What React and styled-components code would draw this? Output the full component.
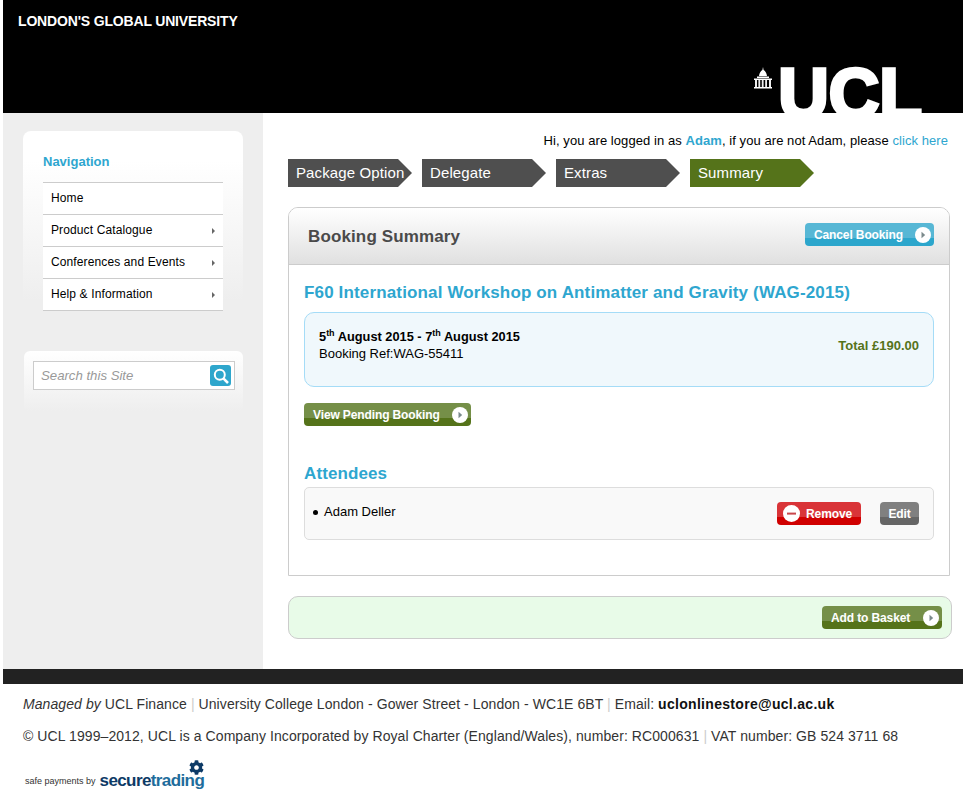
import React from 'react'
import styled, { createGlobalStyle } from 'styled-components'
import { FaCog } from 'react-icons/fa'

const GlobalStyle = createGlobalStyle`
  html, body { margin: 0; padding: 0; background: #fff; }
  body { font-family: "Liberation Sans", Arial, sans-serif; color: #000; }
  * { box-sizing: border-box; }
`

const tones = {
  blue: ['#57b7d5', '#2ca6cc'],
  green: ['#758f48', '#55731a'],
  red: ['#d93438', '#d00000'],
  grey: ['#808080', '#666666'],
}

function Arrow() {
  return (
    <Disc>
      <svg width="16" height="16" viewBox="0 0 16 16">
        <circle cx="8" cy="8" r="8" fill="#fff" />
        <path d="M6.5 4.8 L10.2 8 L6.5 11.2 Z" fill="#7b8a8c" />
      </svg>
    </Disc>
  )
}

function Minus() {
  return (
    <Disc>
      <svg width="17" height="17" viewBox="0 0 17 17">
        <circle cx="8.5" cy="8.5" r="8.5" fill="#fff" />
        <rect x="4" y="7.6" width="9" height="2" fill="#c8484c" />
      </svg>
    </Disc>
  )
}

function Dome() {
  return (
    <svg width="18" height="22" viewBox="0 0 18 22">
      <path d="M9 0 L9.6 3 C11.6 4 12.6 6.4 13 9 L5 9 C5.4 6.4 6.4 4 8.4 3 Z" fill="#fff" />
      <path d="M3 9.6 H15 V11 H3 Z M0 11.4 H18 V13 H0 Z M0 20 H18 V21.6 H0 Z" fill="#fff" />
      <path d="M1 13 H3 V20 H1 Z M4.4 13 H6.2 V20 H4.4 Z M7.8 13 H9.6 V20 H7.8 Z M11.2 13 H13 V20 H11.2 Z M15 13 H17 V20 H15 Z" fill="#eee" />
    </svg>
  )
}

function SearchIcon() {
  return (
    <svg width="16" height="16" viewBox="0 0 16 16" fill="none" stroke="#fff" strokeWidth="2">
      <circle cx="6.8" cy="6.8" r="5" />
      <path d="M10.6 10.6 L15 15" strokeWidth="2.6" />
    </svg>
  )
}

const navItems = [
  { label: 'Home' },
  { label: 'Product Catalogue', more: true },
  { label: 'Conferences and Events', more: true },
  { label: 'Help & Information', more: true },
]

const steps = ['Package Option', 'Delegate', 'Extras', 'Summary']

export default function App() {
  return (
    <Page>
      <GlobalStyle />
      <Header>
        <Strap>LONDON'S GLOBAL UNIVERSITY</Strap>
        <Logo>
          <Dome />
          <LogoWord>UCL</LogoWord>
        </Logo>
      </Header>

      <Body>
        <Sidebar>
          <NavCard>
            <NavTitle>Navigation</NavTitle>
            <NavList>
              {navItems.map((item) => (
                <NavItem key={item.label}>
                  {item.label}
                  {item.more && <NavCaret />}
                </NavItem>
              ))}
            </NavList>
          </NavCard>
          <SearchCard>
            <SearchBox>
              <SearchInput placeholder="Search this Site" />
              <SearchBtn><SearchIcon /></SearchBtn>
            </SearchBox>
          </SearchCard>
        </Sidebar>

        <Main>
          <Greeting>
            Hi, you are logged in as <UserName>Adam</UserName>, if you are not Adam, please <Link>click here</Link>
          </Greeting>
          <Steps>
            {steps.map((s) => (
              <Step key={s} $active={s === 'Summary'}>{s}</Step>
            ))}
          </Steps>

          <Panel>
            <PanelHead>
              <PanelTitle>Booking Summary</PanelTitle>
              <Button $tone="blue" $width={129}>Cancel Booking<Arrow /></Button>
            </PanelHead>
            <PanelBody>
              <Heading>F60 International Workshop on Antimatter and Gravity (WAG-2015)</Heading>
              <InfoBox>
                <div>
                  <Dates>5<sup>th</sup> August 2015 - 7<sup>th</sup> August 2015</Dates>
                  <Ref>Booking Ref:WAG-55411</Ref>
                </div>
                <Total>Total £190.00</Total>
              </InfoBox>
              <Button $tone="green" $width={167}>View Pending Booking<Arrow /></Button>
              <SubHeading>Attendees</SubHeading>
              <Attendee>
                <AttendeeName>Adam Deller</AttendeeName>
                <Button $tone="red" $width={84} $iconFirst><Minus />Remove</Button>
                <Button $tone="grey" $width={39} $center>Edit</Button>
              </Attendee>
            </PanelBody>
          </Panel>

          <BasketBar>
            <Button $tone="green" $width={120}>Add to Basket<Arrow /></Button>
          </BasketBar>
        </Main>
      </Body>

      <DarkBar />

      <Footer>
        <FootLine>
          <em>Managed by</em> UCL Finance <Sep>|</Sep> University College London - Gower Street - London - WC1E 6BT <Sep>|</Sep> Email: <strong>uclonlinestore@ucl.ac.uk</strong>
        </FootLine>
        <FootLine>
          © UCL 1999–2012, UCL is a Company Incorporated by Royal Charter (England/Wales), number: RC000631 <Sep>|</Sep> VAT number: GB 524 3711 68
        </FootLine>
        <Payments>
          <SafeText>safe payments by</SafeText>
          <Brand>
            <Gear><FaCog size={15} /></Gear>
            secure<BrandTail>trading</BrandTail>
          </Brand>
        </Payments>
      </Footer>
    </Page>
  )
}

const Page = styled.div`
  width: 960px;
  margin-left: 3px;
`
const Header = styled.header`
  height: 113px;
  background: #000;
  overflow: hidden;
  padding: 13px 15px 0;
  display: flex;
  justify-content: space-between;
`
const Strap = styled.div`
  color: #fff;
  font-size: 14px;
  font-weight: bold;
  line-height: 17px;
  letter-spacing: -0.17px;
`
const Logo = styled.div`
  display: flex;
  align-items: flex-start;
  gap: 6px;
  margin: 54px 26px 0 0;
`
const LogoWord = styled.div`
  color: #fff;
  font-size: 70px;
  font-weight: bold;
  line-height: 51px;
  margin-top: 2px;
  -webkit-text-stroke: 3.5px #fff;
`
const Body = styled.div`
  display: flex;
  height: 556px;
`
const Sidebar = styled.aside`
  width: 260px;
  background: #eeeeee;
  padding: 18px 20px 0;
`
const NavCard = styled.div`
  height: 196px;
  padding: 23px 20px 0;
  border-radius: 8px;
  background: linear-gradient(#ffffff 0, #ffffff 30px, #eeeeee 170px);
`
const NavTitle = styled.div`
  color: #2ea6cf;
  font-size: 13px;
  font-weight: bold;
  line-height: 16px;
  margin-bottom: 12px;
`
const NavList = styled.ul`
  list-style: none;
  margin: 0;
  padding: 0;
  background: #fff;
  border-bottom: 1px solid #cccccc;
`
const NavItem = styled.li`
  height: 32px;
  border-top: 1px solid #cccccc;
  padding: 0 8px 2px;
  display: flex;
  align-items: center;
  justify-content: space-between;
  font-size: 12px;
  letter-spacing: 0.12px;
  color: #000;
`
const NavCaret = styled.span`
  width: 0;
  height: 0;
  border-left: 3px solid #666;
  border-top: 3px solid transparent;
  border-bottom: 3px solid transparent;
  margin-top: 2px;
`
const SearchCard = styled.div`
  margin: 24px 0 0 1px;
  height: 62px;
  padding: 10px 8px 0 9px;
  border-radius: 6px;
  background: linear-gradient(#ffffff 0, #eeeeee 60px);
`
const SearchBox = styled.div`
  height: 29px;
  background: #fff;
  border: 1px solid #cccccc;
  display: flex;
  align-items: center;
  justify-content: space-between;
  padding: 0 3px 0 7px;
`
const SearchInput = styled.input`
  border: 0;
  outline: 0;
  width: 160px;
  padding: 0;
  font-family: "Liberation Sans", Arial, sans-serif;
  font-size: 13.2px;
  font-style: italic;
  background: transparent;
  &::placeholder { color: #999999; opacity: 1; }
`
const SearchBtn = styled.span`
  width: 21px;
  height: 21px;
  border-radius: 3px;
  background: #2ea6cc;
  display: flex;
  align-items: center;
  justify-content: center;
`
const Main = styled.main`
  width: 700px;
  padding: 20px 11px 0 25px;
  background: #fff;
`
const Greeting = styled.div`
  text-align: right;
  font-size: 13px;
  line-height: 16px;
  letter-spacing: 0.07px;
  padding-right: 4px;
  margin-bottom: 10px;
`
const UserName = styled.b`
  color: #2ea6cf;
  font-size: 13px;
`
const Link = styled.span`
  color: #2ea6cf;
`
const Steps = styled.div`
  display: flex;
  gap: 10px;
  margin: 0 0 20px;
`
const Step = styled.div`
  width: 124px;
  height: 28px;
  line-height: 27px;
  padding-left: 8px;
  font-size: 15px;
  letter-spacing: 0.12px;
  white-space: nowrap;
  color: #fff;
  background: ${(p) => (p.$active ? '#55731a' : '#4f4f4f')};
  clip-path: polygon(0 0, 110px 0, 124px 14px, 110px 28px, 0 28px);
`
const Panel = styled.section`
  width: 662px;
  height: 369px;
  border: 1px solid #cccccc;
  border-radius: 10px 10px 0 0;
`
const PanelHead = styled.div`
  height: 57px;
  border-radius: 9px 9px 0 0;
  background: linear-gradient(#ffffff, #e0e0e0);
  border-bottom: 1px solid #cccccc;
  padding: 15px 15px 0 19px;
  display: flex;
  justify-content: space-between;
`
const PanelTitle = styled.h2`
  margin: 4px 0 0;
  font-size: 17px;
  line-height: 20px;
  letter-spacing: 0.13px;
  color: #4a4a4a;
`
const PanelBody = styled.div`
  padding: 18px 15px 0;
`
const Heading = styled.h3`
  margin: 0 0 9px;
  font-size: 17px;
  line-height: 20px;
  letter-spacing: 0.15px;
  color: #2ea6cf;
`
const InfoBox = styled.div`
  height: 75px;
  border: 1px solid #a5dcf7;
  border-radius: 10px;
  background: #f0f8fc;
  padding: 15px 14px 0;
  display: flex;
  justify-content: space-between;
  margin-bottom: 16px;
`
const Dates = styled.div`
  font-size: 12.8px;
  font-weight: bold;
  line-height: 17px;
  sup { font-size: 9px; line-height: 0; }
`
const Ref = styled.div`
  font-size: 13px;
  line-height: 17px;
`
const Total = styled.div`
  font-size: 13px;
  font-weight: bold;
  color: #55731a;
  line-height: 17px;
  margin-top: 9px;
`
const Button = styled.span`
  position: relative;
  display: flex;
  align-items: center;
  justify-content: ${(p) => (p.$center ? 'center' : 'space-between')};
  gap: ${(p) => (p.$iconFirst ? '6px' : '0')};
  width: ${(p) => p.$width}px;
  height: 23px;
  padding: ${(p) => (p.$center ? '0' : p.$iconFirst ? '0 9px 0 6px' : '0 3px 0 9px')};
  border-radius: 4px;
  color: #fff;
  font-size: 12px;
  font-weight: bold;
  letter-spacing: -0.12px;
  white-space: nowrap;
  background: linear-gradient(${(p) => tones[p.$tone][0]} 0 65%, ${(p) => tones[p.$tone][1]} 65% 100%);
`
const Disc = styled.span`
  display: flex;
  flex: none;
`
const SubHeading = styled.h3`
  margin: 38px 0 3px;
  font-size: 17px;
  line-height: 20px;
  letter-spacing: 0.1px;
  color: #2ea6cf;
`
const Attendee = styled.div`
  height: 53px;
  border: 1px solid #dddddd;
  border-radius: 5px;
  background: #f9f9f9;
  padding: 14px 14px 0 8px;
  display: flex;
  align-items: flex-start;
  gap: 19px;
`
const AttendeeName = styled.div`
  flex: 1;
  font-size: 13px;
  line-height: 19px;
  padding-left: 11px;
  position: relative;
  &::before {
    content: '';
    position: absolute;
    left: 0;
    top: 8px;
    width: 5px;
    height: 5px;
    border-radius: 50%;
    background: #000;
  }
`
const BasketBar = styled.div`
  width: 664px;
  height: 43px;
  margin-top: 20px;
  border: 1px solid #cccccc;
  border-radius: 10px;
  background: #e8fbe8;
  display: flex;
  justify-content: flex-end;
  padding: 9px 9px 0 0;
`
const DarkBar = styled.div`
  height: 15px;
  background: #222222;
`
const Footer = styled.footer`
  padding: 12px 20px 0;
  color: #333333;
  font-size: 14px;
  letter-spacing: 0.08px;
  height: 126px;
`
const FootLine = styled.div`
  line-height: 16px;
  margin-bottom: 16px;
  white-space: nowrap;
  strong { color: #111; letter-spacing: 0.3px; }
`
const Sep = styled.span`
  color: #cccccc;
`
const Payments = styled.div`
  display: flex;
  align-items: flex-end;
  gap: 4px;
  margin: 9px 0 0 2px;
  letter-spacing: 0;
`
const SafeText = styled.span`
  font-size: 9px;
  line-height: 12px;
  margin-bottom: 3px;
  color: #333;
`
const Brand = styled.span`
  position: relative;
  display: block;
  font-size: 17px;
  font-weight: bold;
  line-height: 18px;
  letter-spacing: -0.6px;
  color: #0d3a66;
  padding-top: 12px;
`
const BrandTail = styled.span`
  color: #1e6d9c;
`
const Gear = styled.span`
  position: absolute;
  right: 0;
  top: 0;
  color: #0d3a66;
  display: flex;
`
